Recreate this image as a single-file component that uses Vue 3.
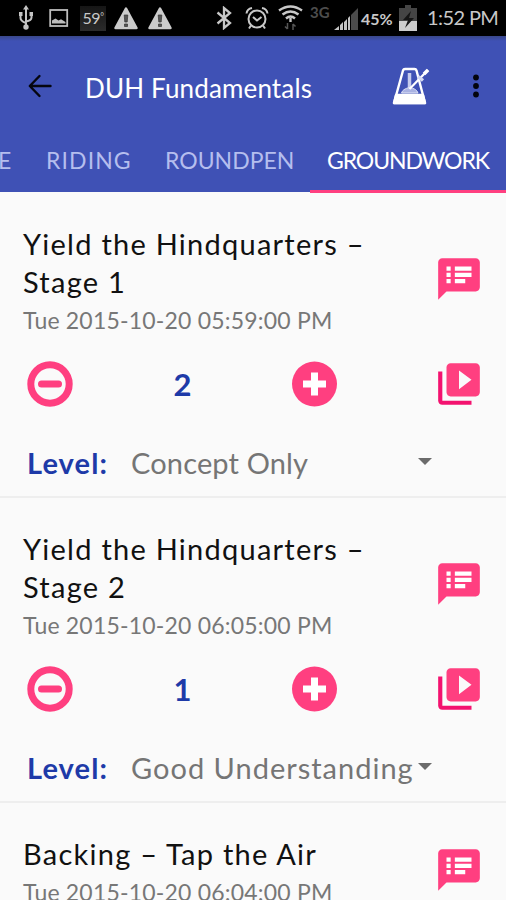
<template>
  <div class="screen">
    <!-- System status bar -->
    <div class="status-bar">
      <svg width="16" height="26" viewBox="0 0 16 26" fill="none" stroke="#c4c4c4" stroke-width="2">
        <path d="M8 3v19M2.500 9v4q0 3 5.500 5M13.500 9v3.500q0 3-5.500 4" />
        <path d="M8 0l3 4.500H5zM1 7h3.500v4H1zM11.500 7h3.500v4h-3.500z" fill="#c4c4c4" stroke="none" />
        <circle cx="8" cy="22" r="2.700" fill="#c4c4c4" stroke="none" />
      </svg>
      <svg width="20" height="20" viewBox="0 0 20 20">
        <rect x="1.200" y="2" width="17" height="16" fill="none" stroke="#bdbdbd" stroke-width="1.800" />
        <path d="M3 15.500v-3l3.500-2 3 2 2.500-1.200 4.500 2.700v1.500z" fill="#bdbdbd" />
      </svg>
      <span class="temperature">59<i>°</i></span>
      <svg v-for="n in 2" :key="n" width="26" height="24" viewBox="0 0 26 24">
        <path d="M13 2.500L23.500 22h-21z" fill="#cbcbcb" stroke="#cbcbcb" stroke-width="2.500" stroke-linejoin="round" />
        <path d="M11.200 9h3.600l-.6 7h-2.400zM11.500 18h3v2.500h-3z" fill="#555" stroke="#333" stroke-width=".7" />
      </svg>
      <svg width="17" height="24" viewBox="0 0 17 24" fill="none" stroke="#c8c8c8" stroke-width="2.300">
        <path d="M1.500 6.500L14 17l-6 5V2l6 5L1.500 17.500" />
      </svg>
      <svg width="24" height="24" viewBox="0 0 24 24" fill="none" stroke="#c8c8c8" stroke-width="2">
        <circle cx="12" cy="13" r="8.500" />
        <path d="M8 11l4 3.500 4.500-3.500M1.500 7.500Q2 3 7 2M17 2q5 1 5.500 5.500M6 19.500l-2 3M18 19.500l2 3" />
      </svg>
      <svg width="25" height="26" viewBox="0 0 25 26" fill="none" stroke="#c8c8c8" stroke-width="2.400">
        <path d="M1 5.500q11.500-8 23 0M4.500 9.500q8-6 16 0M8 13.500q4.500-4 9 0" />
        <path d="M12.500 13v4" />
        <path d="M9.500 18v6M7 21.500l2.500 2.500M15 25v-6M17.500 21.500L15 19" stroke="#555" stroke-width="1.500" />
      </svg>
      <span class="network">3G</span>
      <svg class="signal" width="24" height="24" viewBox="0 0 24 24">
        <path d="M17 8l7-7v22h-7z" fill="#4c4c4c" />
        <path d="M0 23L5 19v4zM6 18l3-3v8H6zM10 15l3-3v11h-3zM14 11l2-2v14h-2z" fill="#c4c4c4" />
      </svg>
      <span class="percent">45%</span>
      <svg width="18" height="26" viewBox="0 0 18 26">
        <path d="M6 0h6v3h6v23H0V3h6z" fill="#454545" />
        <path d="M0 16h18v10H0z" fill="#cdcdcd" />
        <path d="M12 6l-8 9h5l-3 8 9-10h-5z" fill="#161616" />
      </svg>
      <span class="clock">1:52 PM</span>
    </div>

    <!-- App bar -->
    <header class="app-bar">
      <div class="toolbar">
        <button class="icon-btn back">
          <svg width="24" height="24" viewBox="0 0 24 24" fill="none" stroke="#05060f" stroke-width="2.400" stroke-linecap="round" stroke-linejoin="round">
            <path d="M22.500 12H2M11.500 2L1.800 12l9.700 10" />
          </svg>
        </button>
        <h1>DUH Fundamentals</h1>
        <button class="icon-btn metronome">
          <svg width="38" height="40" viewBox="0 0 38 40" fill="none" stroke="#fff" stroke-width="2.400" stroke-linejoin="round">
            <path d="M2 37l9-32.500Q11.500 3 13 3h9.500q1.500 0 2 1.500L33 37z" />
            <path d="M2 37l2-8h27l2 8z" fill="#fff" />
            <path d="M17.500 7v15" stroke="#c5cbed" stroke-width="3.500" />
            <path d="M9.500 27q1-4 8-5.500 7 1 8.500 5.500z" fill="#a9b2e2" stroke="#dfe3f6" stroke-width="1" />
            <path d="M17.500 23L36 4" stroke-width="2.200" />
            <path d="M26 10.500l5 4" stroke-width="3.500" stroke="#d5daf3" />
            <path d="M32 8l4-4" stroke-width="3.500" />
          </svg>
        </button>
        <button class="icon-btn">
          <svg width="6" height="24" viewBox="0 0 6 24" fill="#03040c">
            <circle cx="3" cy="3.500" r="2.900" />
            <circle cx="3" cy="12" r="2.900" />
            <circle cx="3" cy="20.500" r="2.900" />
          </svg>
        </button>
      </div>
      <nav class="tabs">
        <button
          v-for="tab in tabs"
          :key="tab.name"
          :class="['tab', tab.name, { active: tab.name === activeTab }]"
          @click="activeTab = tab.name"
        >
          {{ tab.label }}
        </button>
      </nav>
    </header>

    <!-- Exercise list -->
    <main class="list">
      <section v-for="item in items" :key="item.id" class="item">
        <div class="heading">
          <div class="heading-text">
            <h2>{{ item.title }}</h2>
            <p>{{ item.date }}</p>
          </div>
          <svg class="notes" width="50" height="50" viewBox="0 0 24 24">
            <path d="M5 5h14v10H5z" fill="#fff" />
            <path
              fill="#ff3f80"
              d="M20 2H4c-1.100 0-2 .9-2 2v18l4-4h14c1.100 0 2-.9 2-2V4c0-1.100-.9-2-2-2zM8 14H6v-2h2v2zm0-3H6V9h2v2zm0-3H6V6h2v2zm7 6h-5v-2h5v2zm3-3h-8V9h8v2zm0-3h-8V6h8v2z"
            />
          </svg>
        </div>

        <div class="counter">
          <button class="icon-btn" @click="item.count--">
            <svg width="46" height="46" viewBox="0 0 46 46" fill="none" stroke="#ff3f80">
              <circle cx="23" cy="23" r="19.200" stroke-width="7" />
              <path d="M14.500 23h17" stroke-width="7" stroke-linecap="round" />
            </svg>
          </button>
          <span class="count">{{ item.count }}</span>
          <button class="icon-btn" @click="item.count++">
            <svg width="46" height="46" viewBox="0 0 46 46">
              <circle cx="22.500" cy="23" r="22.500" fill="#ff3f80" />
              <path d="M22.500 11.500v23M11 23h23" stroke="#fff" stroke-width="7" />
            </svg>
          </button>
          <svg class="videos" width="50" height="50" viewBox="0 0 24 24">
            <path fill="#f3126f" d="M4 6H2v14c0 1.100.9 2 2 2h14v-2H4V6z" />
            <path
              fill="#ff3f80"
              d="M20 2H8c-1.100 0-2 .9-2 2v12c0 1.100.9 2 2 2h12c1.100 0 2-.9 2-2V4c0-1.100-.9-2-2-2zm-8 12.500v-9l6 4.500-6 4.500z"
            />
          </svg>
        </div>

        <div class="level">
          <span class="label">Level:</span>
          <div class="select">
            <span :class="{ full: item.level.length > 15 }">{{ item.level }}</span>
            <i class="caret"></i>
          </div>
        </div>
      </section>
    </main>
  </div>
</template>

<script setup>
import { ref } from 'vue';

const tabs = [
  { name: 'previous', label: 'E' },
  { name: 'riding', label: 'RIDING' },
  { name: 'roundpen', label: 'ROUNDPEN' },
  { name: 'groundwork', label: 'GROUNDWORK' },
];

const activeTab = ref('groundwork');

const items = ref([
  {
    id: 1,
    title: 'Yield the Hindquarters – Stage 1',
    date: 'Tue 2015-10-20 05:59:00 PM',
    count: 2,
    level: 'Concept Only',
  },
  {
    id: 2,
    title: 'Yield the Hindquarters – Stage 2',
    date: 'Tue 2015-10-20 06:05:00 PM',
    count: 1,
    level: 'Good Understanding',
  },
  {
    id: 3,
    title: 'Backing – Tap the Air',
    date: 'Tue 2015-10-20 06:04:00 PM',
    count: 1,
    level: 'Good Understanding',
  },
]);
</script>

<style>
body {
  margin: 0;
  background: #fafafa;
}
</style>

<style scoped>
.screen {
  width: 506px;
  height: 900px;
  overflow: hidden;
  background: #fafafa;
  font-family: Lato, "Open Sans", sans-serif;
  display: flex;
  flex-direction: column;
}

.status-bar {
  flex: none;
  height: 36px;
  box-sizing: border-box;
  padding-left: 18px;
  background: #000;
  color: #c8c8c8;
  display: grid;
  grid-template-columns: 31px 31px 33px 34px 69px 29px 33px 32px 24px 27px 38px 28px 79px;
  align-items: center;
  white-space: nowrap;
}

.temperature {
  width: 26px;
  height: 25px;
  line-height: 24px;
  background: linear-gradient(#161616, #2b2b2b);
  font-size: 16px;
  letter-spacing: -0.5px;
  text-align: center;
}

.temperature i {
  font-style: normal;
  font-size: 9px;
  line-height: 1;
  vertical-align: 4px;
}

.network {
  color: #4d4d4d;
  font-size: 15px;
  font-weight: 700;
  padding-bottom: 12px;
}

.signal {
  margin-top: 2px;
}

.percent {
  font-size: 16px;
  font-weight: 700;
}

.clock {
  font-size: 20px;
  letter-spacing: -0.6px;
  padding-bottom: 2px;
}

.icon-btn {
  border: 0;
  padding: 0;
  background: none;
  display: flex;
  cursor: pointer;
}

.app-bar {
  flex: none;
  height: 157px;
  background: linear-gradient(#394789, #3f51b5 5px, #3f51b5 156px, #fafafa 156px);
}

.toolbar {
  height: 100px;
  box-sizing: border-box;
  padding: 0 27px 0 28px;
  display: flex;
  align-items: center;
}

.back {
  margin-right: 33px;
}

h1 {
  flex: 1;
  margin: 0;
  padding-top: 3px;
  color: #fff;
  font-size: 26px;
  font-weight: 400;
  letter-spacing: 0.15px;
  line-height: 40px;
  white-space: nowrap;
}

.metronome {
  margin-right: 43px;
}

.tabs {
  height: 57px;
  display: flex;
}

.tab {
  box-sizing: border-box;
  padding: 0 0 5px;
  border: 0;
  border-bottom: 3px solid transparent;
  background: none;
  color: #b5beee;
  font-family: inherit;
  font-size: 23px;
  line-height: 49px;
  white-space: nowrap;
  text-align: left;
  cursor: pointer;
}

.tab.active {
  color: #fff;
  border-bottom-color: #ff3f80;
}

.previous {
  width: 29px;
  text-indent: -2px;
}

.riding {
  width: 119px;
  padding-left: 17px;
  letter-spacing: 1.1px;
}

.roundpen {
  width: 162px;
  padding-left: 17px;
}

.groundwork {
  width: 196px;
  padding-left: 17px;
  letter-spacing: -1.1px;
}

.item {
  box-sizing: border-box;
  padding-top: 32px;
  border-bottom: 2px solid #eeeeee;
}

.heading {
  padding: 0 22px 0 23px;
  display: flex;
  justify-content: space-between;
  align-items: center;
}

h2 {
  width: 360px;
  margin: 0;
  color: #111;
  font-size: 29px;
  font-weight: 400;
  letter-spacing: 1.25px;
  line-height: 38px;
}

p {
  margin: 0;
  padding-top: 3px;
  color: #777;
  font-size: 23px;
  letter-spacing: 0.2px;
  line-height: 32px;
  white-space: nowrap;
}

.notes {
  flex: none;
  margin-bottom: 4px;
}

.counter {
  height: 50px;
  margin-top: 23px;
  padding: 0 22px 0 27px;
  display: flex;
  align-items: center;
}

.count {
  width: 219px;
  color: #1e3aa8;
  font-size: 31px;
  font-weight: 700;
  text-align: center;
}

.videos {
  margin-left: auto;
}

.level {
  height: 40px;
  margin-top: 34px;
  padding: 0 74px 13px 27px;
  line-height: 40px;
  font-size: 29px;
  white-space: nowrap;
  display: flex;
}

.label {
  width: 104px;
  color: #1e3aa8;
  font-weight: 700;
  letter-spacing: 1.1px;
}

.select {
  flex: 1;
  color: #757575;
  letter-spacing: 0.15px;
  display: flex;
  justify-content: space-between;
  align-items: center;
}

.select .full {
  letter-spacing: 1px;
}

.caret {
  flex: none;
  border: 7px solid transparent;
  border-top-color: #6b6b6b;
  border-bottom-width: 0;
  margin-bottom: 3px;
}
</style>
